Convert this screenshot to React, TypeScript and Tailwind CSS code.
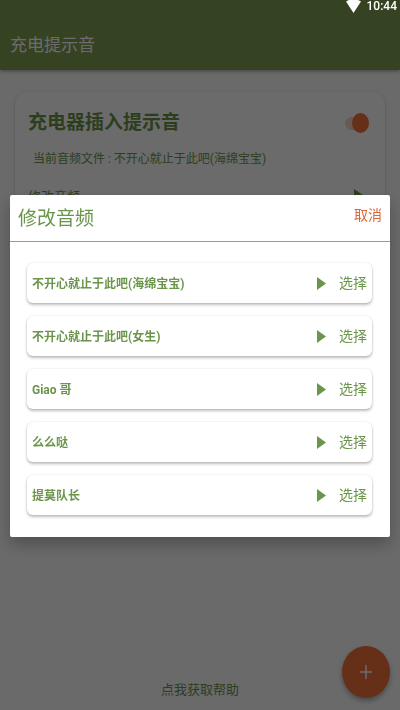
import { useState } from "react";

const tracks = ["不开心就止于此吧(海绵宝宝)", "不开心就止于此吧(女生)", "Giao 哥", "么么哒", "提莫队长"];

function PlayIcon({ className }: { className: string }) {
  return (
    <svg viewBox="0 0 9 13" preserveAspectRatio="none" className={className} aria-hidden="true">
      <path d="M0 0 9 6.5 0 13Z" fill="currentColor" />
    </svg>
  );
}

function StatusBar() {
  return (
    <div className="fixed inset-x-0 top-0 z-20 flex h-3 items-center justify-end gap-1.5 pr-[3px] text-white">
      <svg viewBox="0 0 15 13" className="h-[13px] w-[15px]" aria-hidden="true">
        <path d="M0 1.5C2 .3 4.5-1 7.5-1S13 .3 15 1.5L7.5 13Z" fill="currentColor" />
      </svg>
      <span className="text-xs font-medium leading-3 font-['Roboto',sans-serif]">10:44</span>
    </div>
  );
}

function AudioCard() {
  const [enabled, setEnabled] = useState(true);
  return (
    <section className="mx-[15px] mt-[22px] rounded-xl bg-white px-[13px] pt-[17px] pb-6 shadow-[0_1px_3px_rgba(0,0,0,0.25)]">
      <div className="flex items-center justify-between pr-[3px]">
        <label htmlFor="plug-sound" className="text-[19px] leading-7 font-bold">
          充电器插入提示音
        </label>
        <span className="relative flex h-5 w-6 items-center">
          <input
            id="plug-sound"
            type="checkbox"
            checked={enabled}
            onChange={(e) => setEnabled(e.target.checked)}
            className="h-[13px] w-[22px] appearance-none rounded-full bg-[#f5d5c8]"
          />
          <span className="pointer-events-none absolute right-0 top-0 h-5 w-[17px] rounded-[50%] bg-[#f2713a]" />
        </span>
      </div>
      <p className="mt-3 pl-[5px] text-xs leading-5">当前音频文件 : 不开心就止于此吧(海绵宝宝)</p>
      <div className="mt-4 flex items-center justify-between pr-1.5">
        <button type="button" className="text-[13px] leading-6">修改音频</button>
        <button type="button" aria-label="播放">
          <PlayIcon className="h-4 w-3" />
        </button>
      </div>
    </section>
  );
}

function TrackRow({ name }: { name: string }) {
  return (
    <li className="flex h-10 items-center rounded-md bg-white pr-[5px] pl-[5px] shadow-[0_0_2px_rgba(0,0,0,0.12),0_2px_3px_rgba(0,0,0,0.25)]">
      <span className="flex-1 pt-0.5 text-xs font-bold">{name}</span>
      <button type="button" aria-label={`播放 ${name}`} className="mr-[13px]">
        <PlayIcon className="h-[13px] w-[9px]" />
      </button>
      <button type="button" className="text-[14px] leading-6">选择</button>
    </li>
  );
}

function AudioDialog() {
  return (
    <div className="fixed inset-0 z-10 flex items-center bg-black/58 px-[10px] pt-[22px]">
      <div
        role="dialog"
        aria-modal="true"
        aria-labelledby="dialog-title"
        className="w-full rounded-xs bg-white shadow-[0_8px_16px_rgba(0,0,0,0.25)]"
      >
        <header className="flex h-[47px] items-start justify-between border-b border-[#9a9a9a] px-2">
          <h2 id="dialog-title" className="text-[19px] leading-12">修改音频</h2>
          <button type="button" className="text-[14px] leading-10 text-[#d9673a]">取消</button>
        </header>
        <ul className="flex flex-col gap-[13px] pt-[21px] pr-[18px] pb-[22px] pl-[17px]">
          {tracks.map((name) => (
            <TrackRow key={name} name={name} />
          ))}
        </ul>
      </div>
    </div>
  );
}

export default function App() {
  return (
    <div className="flex min-h-screen flex-col bg-[#fcfcfc] text-[#6b954b] font-['Roboto','Noto_Sans_CJK_SC',sans-serif]">
      <StatusBar />
      <header className="flex h-[70px] items-end bg-[#7e9f53] px-[10px] pb-[13px] shadow-[0_1px_4px_rgba(0,0,0,0.4)]">
        <h1 className="text-[17px] leading-6 text-white">充电提示音</h1>
      </header>
      <main className="flex flex-1 flex-col">
        <AudioCard />
        <a href="#help" className="mx-auto mt-auto pb-2 text-[13px] leading-6">点我获取帮助</a>
      </main>
      <button
        type="button"
        aria-label="添加"
        className="fixed right-[10px] bottom-3 flex h-[52px] w-12 items-center justify-center rounded-[50%] bg-[#f2713a] text-white shadow-[0_3px_5px_rgba(0,0,0,0.3)]"
      >
        <svg viewBox="0 0 12 14" className="h-[14px] w-3" aria-hidden="true">
          <path d="M6 0V14M0 7H12" stroke="currentColor" strokeWidth="1.5" />
        </svg>
      </button>
      <AudioDialog />
    </div>
  );
}
